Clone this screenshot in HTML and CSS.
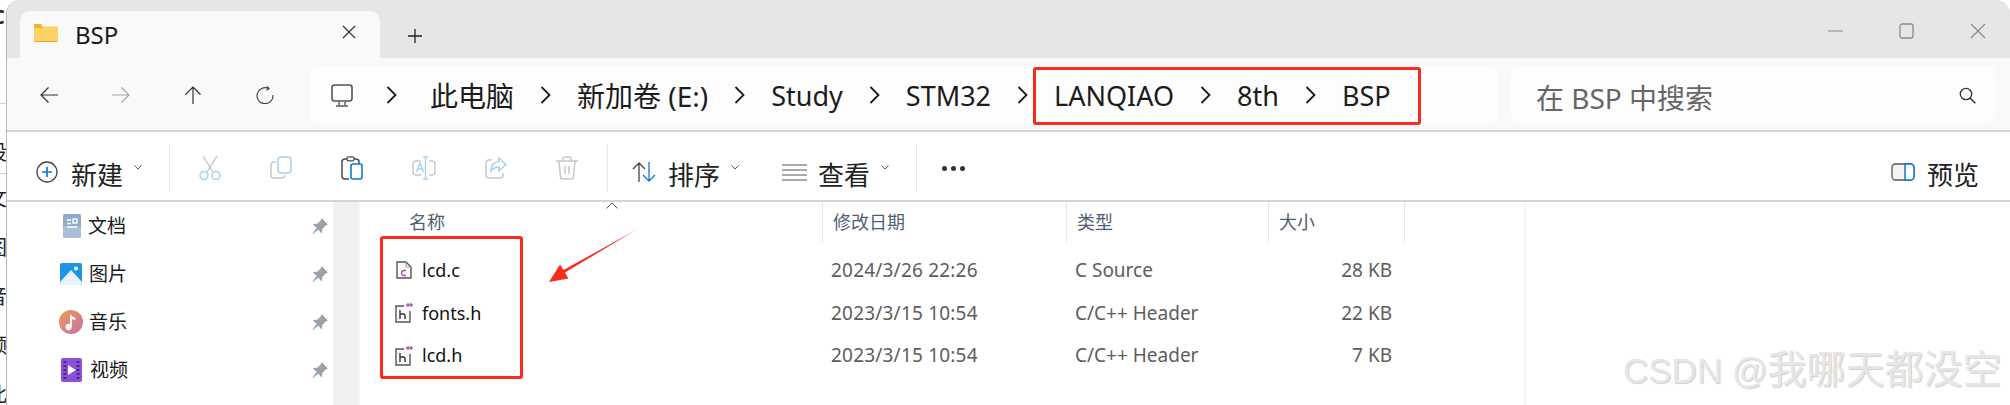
FILE: index.html
```html
<!DOCTYPE html>
<html lang="zh">
<head>
<meta charset="utf-8">
<title>BSP</title>
<link rel="stylesheet" href="styles.css">
</head>
<body>
<div class="page">
  <div class="strip">
    <span class="strip-c">C</span>
    <span class="strip-t first">设</span>
    <span class="strip-t">文</span>
    <span class="strip-t">图</span>
    <span class="strip-t">音</span>
    <span class="strip-t">频</span>
    <span class="strip-t">此</span>
  </div>
  <div class="window">
    <header class="titlebar">
      <div class="tab">
        <svg class="folder" width="24" height="18" viewBox="0 0 24 18"><path d="M0 1.5C0 .7.7 0 1.5 0h5.5l2.5 2.5H22.500c.8 0 1.500.7 1.500 1.500v12.500c0 .8-.7 1.500-1.500 1.500h-21C.7 18 0 17.300 0 16.500z" fill="#fbd264"/><path d="M0 4h9.500L7 1.500V0H1.500C.7 0 0 .7 0 1.500z" fill="#f0b429"/><path d="M0 17h24v-.5c0 .8-.7 1.500-1.500 1.500h-21C.7 18 0 17.300 0 16.500z" fill="#e9a91f"/></svg>
        <span class="tab-title">BSP</span>
        <svg class="tab-close" width="14" height="14" viewBox="0 0 14 14"><path d="M1 1l12 12M13 1L1 13" stroke="#333" stroke-width="1.200" fill="none"/></svg>
      </div>
      <svg class="tab-add" width="16" height="16" viewBox="0 0 16 16"><path d="M8 1v14M1 8h14" stroke="#222" stroke-width="1.300" fill="none"/></svg>
      <div class="controls">
        <svg width="16" height="16" viewBox="0 0 16 16"><path d="M0 8h15" stroke="#8a8a8a" stroke-width="1.200"/></svg>
        <svg width="16" height="16" viewBox="0 0 16 16"><rect x="1" y="1" width="13" height="14" rx="2" fill="none" stroke="#8a8a8a" stroke-width="1.300"/></svg>
        <svg width="16" height="16" viewBox="0 0 16 16"><path d="M1 1l14 14M15 1L1 15" stroke="#8a8a8a" stroke-width="1.200" fill="none"/></svg>
      </div>
    </header>

    <nav class="navbar">
      <div class="nav-buttons">
        <svg width="18" height="18" viewBox="0 0 18 18"><path d="M18 9H1M8.500 1.500L1 9l7.500 7.500" stroke="#333" stroke-width="1.200" fill="none"/></svg>
        <svg width="18" height="18" viewBox="0 0 18 18"><path d="M0 9h17M9.500 1.500L17 9l-7.500 7.500" stroke="#a8a8a8" stroke-width="1.200" fill="none"/></svg>
        <svg width="18" height="18" viewBox="0 0 18 18"><path d="M9 18V1M1.500 8.500L9 1l7.500 7.500" stroke="#333" stroke-width="1.200" fill="none"/></svg>
        <svg width="18" height="18" viewBox="0 0 18 18"><path d="M12.500 2.500A8 8 0 1 0 17 9M11 .5l2 2.200-2.600 1.600" stroke="#444" stroke-width="1.200" fill="none"/></svg>
      </div>
      <div class="address">
        <svg class="monitor" width="22" height="23" viewBox="0 0 22 23"><rect x="1" y="1" width="20" height="16" rx="2.500" fill="none" stroke="#555" stroke-width="1.600"/><path d="M8 17.500v3.500M14 17.500v3.500M5 22h12" stroke="#555" stroke-width="1.400" fill="none"/></svg>
        <svg class="chev" width="11" height="18" viewBox="0 0 11 18"><path d="M1.500 1l8 8-8 8" stroke="#1c1c1c" stroke-width="1.800" fill="none"/></svg>
        <span class="crumb cjk first-crumb">此电脑</span>
        <svg class="chev" width="11" height="18" viewBox="0 0 11 18"><path d="M1.500 1l8 8-8 8" stroke="#1c1c1c" stroke-width="1.800" fill="none"/></svg>
        <span class="crumb cjk">新加卷 (E:)</span>
        <svg class="chev" width="11" height="18" viewBox="0 0 11 18"><path d="M1.500 1l8 8-8 8" stroke="#1c1c1c" stroke-width="1.800" fill="none"/></svg>
        <span class="crumb">Study</span>
        <svg class="chev" width="11" height="18" viewBox="0 0 11 18"><path d="M1.500 1l8 8-8 8" stroke="#1c1c1c" stroke-width="1.800" fill="none"/></svg>
        <span class="crumb">STM32</span>
        <svg class="chev" width="11" height="18" viewBox="0 0 11 18"><path d="M1.500 1l8 8-8 8" stroke="#1c1c1c" stroke-width="1.800" fill="none"/></svg>
        <span class="crumb">LANQIAO</span>
        <svg class="chev" width="11" height="18" viewBox="0 0 11 18"><path d="M1.500 1l8 8-8 8" stroke="#1c1c1c" stroke-width="1.800" fill="none"/></svg>
        <span class="crumb">8th</span>
        <svg class="chev" width="11" height="18" viewBox="0 0 11 18"><path d="M1.500 1l8 8-8 8" stroke="#1c1c1c" stroke-width="1.800" fill="none"/></svg>
        <span class="crumb">BSP</span>
      </div>
      <div class="search">
        <span class="search-text">在 BSP 中搜索</span>
        <svg class="search-icon" width="17" height="17" viewBox="0 0 17 17"><circle cx="7" cy="7" r="5.700" fill="none" stroke="#333" stroke-width="1.300"/><path d="M11 11l5.300 5.300" stroke="#333" stroke-width="1.600"/></svg>
      </div>
    </nav>

    <div class="toolbar">
      <div class="tool new">
        <svg width="22" height="22" viewBox="0 0 22 22"><circle cx="11" cy="11" r="10" fill="none" stroke="#444" stroke-width="1.300"/><path d="M11 6v10M6 11h10" stroke="#0f78d4" stroke-width="1.700"/></svg>
        <span class="tool-label">新建</span>
        <svg class="caret" width="8" height="5" viewBox="0 0 8 5"><path d="M.5.5L4 4 7.500.5" stroke="#555" fill="none"/></svg>
      </div>
      <span class="sep first-sep"></span>
      <div class="actions">
        <svg width="22" height="24" viewBox="0 0 22 24"><path d="M4 0l10 16M18 0L8 16" stroke="#c4c4c4" stroke-width="1.300" fill="none"/><circle cx="5" cy="19.500" r="4" fill="none" stroke="#a6d0f2" stroke-width="1.500"/><circle cx="17" cy="19.500" r="4" fill="none" stroke="#a6d0f2" stroke-width="1.500"/></svg>
        <svg width="22" height="24" viewBox="0 0 22 24"><path d="M6 6H4a3 3 0 0 0-3 3v10a3 3 0 0 0 3 3h8a3 3 0 0 0 3-3" fill="none" stroke="#c8c8c8" stroke-width="1.500"/><rect x="8" y="1" width="13" height="16" rx="3" fill="#fff" stroke="#a6d0f2" stroke-width="1.500"/></svg>
        <svg width="22" height="24" viewBox="0 0 22 24"><path d="M8 23H4a3 3 0 0 1-3-3V6a3 3 0 0 1 3-3h11a3 3 0 0 1 3 3v3" fill="none" stroke="#4a4a4a" stroke-width="1.500"/><rect x="6" y=".8" width="7" height="4" rx="1.500" fill="#fff" stroke="#4a4a4a" stroke-width="1.300"/><rect x="10" y="8" width="11" height="15" rx="2" fill="#fff" stroke="#0f78d4" stroke-width="1.600"/></svg>
        <svg width="24" height="24" viewBox="0 0 24 24"><path d="M9 5H4a3 3 0 0 0-3 3v8a3 3 0 0 0 3 3h5M17 5h3a3 3 0 0 1 3 3v8a3 3 0 0 1-3 3h-3" fill="none" stroke="#c8c8c8" stroke-width="1.500"/><path d="M11 1h5M11 23h5M13.500 1v22M4.500 16l3.500-9 3.500 9M6 13h4" fill="none" stroke="#a6d0f2" stroke-width="1.400"/></svg>
        <svg width="22" height="22" viewBox="0 0 22 22"><path d="M7 3H4a3 3 0 0 0-3 3v12a3 3 0 0 0 3 3h11a3 3 0 0 0 3-3v-2" fill="none" stroke="#c8c8c8" stroke-width="1.500"/><path d="M14 1l7 6.500-7 6.500v-4c-4 0-6 1-8 4 0-6 3-9 8-9.500z" fill="#fff" stroke="#a6d0f2" stroke-width="1.500"/></svg>
        <svg width="22" height="24" viewBox="0 0 22 24"><path d="M0 5h22M7 5V3a2 2 0 0 1 2-2h4a2 2 0 0 1 2 2v2M3 5l1.500 16a2 2 0 0 0 2 2h9a2 2 0 0 0 2-2L19 5M9 10v8M13 10v8" fill="none" stroke="#c8c8c8" stroke-width="1.500"/></svg>
      </div>
      <span class="sep"></span>
      <div class="tool sort">
        <svg width="24" height="20" viewBox="0 0 24 20"><path d="M7 20V1M1 7l6-6 6 6" stroke="#444" stroke-width="1.300" fill="none"/><path d="M17 0v19M11 13l6 6 6-6" stroke="#0f78d4" stroke-width="1.300" fill="none"/></svg>
        <span class="tool-label">排序</span>
        <svg class="caret" width="8" height="5" viewBox="0 0 8 5"><path d="M.5.5L4 4 7.500.5" stroke="#555" fill="none"/></svg>
      </div>
      <div class="tool view">
        <svg width="25" height="17" viewBox="0 0 25 17"><path d="M0 1h25M0 6h25M0 11h25M0 16h25" stroke="#555" stroke-width="1.200"/></svg>
        <span class="tool-label">查看</span>
        <svg class="caret" width="8" height="5" viewBox="0 0 8 5"><path d="M.5.5L4 4 7.500.5" stroke="#555" fill="none"/></svg>
      </div>
      <span class="sep"></span>
      <div class="dots"><i></i><i></i><i></i></div>
      <div class="tool preview">
        <svg width="24" height="18" viewBox="0 0 24 18"><rect x="1" y="1" width="22" height="16" rx="3.500" fill="#f4f4f4" stroke="#555" stroke-width="1.300"/><path d="M14 1h5.500A3.500 3.500 0 0 1 23 4.500v9a3.500 3.500 0 0 1-3.500 3.500H14z" fill="#fff" stroke="#0f78d4" stroke-width="1.500"/></svg>
        <span class="tool-label">预览</span>
      </div>
    </div>

    <main class="content">
      <aside class="sidebar">
        <div class="side-row">
          <svg class="side-icon" width="22" height="24" viewBox="0 0 22 24"><rect x="2" width="18" height="24" rx="2" fill="#8fabc9"/><rect x="2" y="12" width="18" height="12" rx="2" fill="#a9bfd6"/><path d="M6 6h4M6 9.500h4M12 5h4v4h-4zM6 13h10" stroke="#fff" stroke-width="1.400" fill="none"/></svg>
          <span class="side-label">文档</span>
          <svg class="pin" width="16" height="16" viewBox="0 0 16 16"><path d="M9.500 0L16 6.500l-2 .7-3.500 3.500-.5 3.500-1 1-2.700-3.500L1 16l-.5-.5 4.300-5.800L1 7l1-1 3.500-.5L9 2z" fill="#97a3ad"/></svg>
        </div>
        <div class="side-row">
          <svg class="side-icon" width="22" height="22" viewBox="0 0 22 22"><rect width="22" height="22" rx="2" fill="#1c95e6"/><path d="M0 19L11 7l11 12v1a2 2 0 0 1-2 2H2a2 2 0 0 1-2-2z" fill="#e8f4fc"/><circle cx="16" cy="5.500" r="2" fill="#fff"/></svg>
          <span class="side-label">图片</span>
          <svg class="pin" width="16" height="16" viewBox="0 0 16 16"><path d="M9.500 0L16 6.500l-2 .7-3.500 3.500-.5 3.500-1 1-2.700-3.500L1 16l-.5-.5 4.300-5.800L1 7l1-1 3.500-.5L9 2z" fill="#97a3ad"/></svg>
        </div>
        <div class="side-row">
          <svg class="side-icon" width="24" height="24" viewBox="0 0 24 24"><defs><linearGradient id="music" x1="0" y1="0" x2="1" y2="1"><stop offset="0" stop-color="#ee9a55"/><stop offset="1" stop-color="#c770a8"/></linearGradient></defs><circle cx="12" cy="12" r="12" fill="url(#music)"/><path d="M11 5h1.800c.3 2 2 2.500 3.500 3v2c-1.500 0-2.500-.5-3.500-1.200V17a3.200 3.200 0 1 1-1.800-2.900z" fill="#fff"/></svg>
          <span class="side-label">音乐</span>
          <svg class="pin" width="16" height="16" viewBox="0 0 16 16"><path d="M9.500 0L16 6.500l-2 .7-3.500 3.500-.5 3.500-1 1-2.700-3.500L1 16l-.5-.5 4.300-5.800L1 7l1-1 3.500-.5L9 2z" fill="#97a3ad"/></svg>
        </div>
        <div class="side-row">
          <svg class="side-icon" width="21" height="24" viewBox="0 0 21 24"><rect width="21" height="24" rx="2" fill="#8a50d8"/><path d="M4 3v18M17 3v18" stroke="#4c2490" stroke-width="3" stroke-dasharray="2 2"/><path d="M7 7l8 5-8 5z" fill="#fff"/></svg>
          <span class="side-label">视频</span>
          <svg class="pin" width="16" height="16" viewBox="0 0 16 16"><path d="M9.500 0L16 6.500l-2 .7-3.500 3.500-.5 3.500-1 1-2.700-3.500L1 16l-.5-.5 4.300-5.800L1 7l1-1 3.500-.5L9 2z" fill="#97a3ad"/></svg>
        </div>
      </aside>
      <div class="gutter"></div>
      <section class="files">
        <div class="file-grid">
          <div class="head name-head">名称
            <svg class="sort-caret" width="12" height="7" viewBox="0 0 12 7"><path d="M.5 6.500L6 1l5.500 5.500" stroke="#555" fill="none"/></svg>
          </div>
          <div class="head">修改日期</div>
          <div class="head">类型</div>
          <div class="head">大小</div>
          <div class="head end-head"></div>

          <div class="cell name">
            <svg width="16" height="18" viewBox="0 0 16 18"><path d="M1 1h9l5 5v11H1z" fill="#fafafa" stroke="#555" stroke-width="1.400"/><path d="M10 1v5h5" fill="none" stroke="#999"/><path d="M10 9.500H8a2 2 0 0 0 0 5h2" fill="none" stroke="#a65aa8" stroke-width="1.300"/></svg>
            <span>lcd.c</span>
          </div>
          <div class="cell date">2024/3/26 22:26</div>
          <div class="cell type">C Source</div>
          <div class="cell size">28 KB</div>
          <div class="cell"></div>

          <div class="cell name">
            <svg width="18" height="21" viewBox="0 0 18 21"><path d="M9 4H1v16h14V9" fill="#fafafa" stroke="#555" stroke-width="1.400"/><path d="M5 8v9M5 12h3.500a1.500 1.500 0 0 1 1.500 1.500V17" fill="none" stroke="#333" stroke-width="1.400"/><path d="M11 3h4M13 1v4M14 3h4M16 1v4" stroke="#a65aa8" stroke-width="1.300" fill="none"/></svg>
            <span>fonts.h</span>
          </div>
          <div class="cell date">2023/3/15 10:54</div>
          <div class="cell type">C/C++ Header</div>
          <div class="cell size">22 KB</div>
          <div class="cell"></div>

          <div class="cell name">
            <svg width="18" height="21" viewBox="0 0 18 21"><path d="M9 4H1v16h14V9" fill="#fafafa" stroke="#555" stroke-width="1.400"/><path d="M5 8v9M5 12h3.500a1.500 1.500 0 0 1 1.500 1.500V17" fill="none" stroke="#333" stroke-width="1.400"/><path d="M11 3h4M13 1v4M14 3h4M16 1v4" stroke="#a65aa8" stroke-width="1.300" fill="none"/></svg>
            <span>lcd.h</span>
          </div>
          <div class="cell date">2023/3/15 10:54</div>
          <div class="cell type">C/C++ Header</div>
          <div class="cell size">7 KB</div>
          <div class="cell"></div>
        </div>
      </section>
    </main>
  </div>

  <div class="mark mark-path"></div>
  <div class="mark mark-files"></div>
  <svg class="arrow" width="90" height="56" viewBox="0 0 90 56"><path d="M87 1L16 43.500l3.500 6L0 53 11 35.500l3.500 5.500z" fill="#fb2a1e"/></svg>
  <div class="watermark"><span class="wm-latin">CSDN @</span>我哪天都没空</div>
</div>
</body>
</html>
```

FILE: styles.css
```css
* { box-sizing: border-box; }
html, body { margin: 0; padding: 0; background: #fff; }
body {
  font-family: "Noto Sans", "Noto Sans CJK SC", sans-serif;
  color: #1a1a1a;
}
svg { display: block; flex: none; }

.page {
  position: relative;
  display: flex;
  width: 2010px;
  height: 405px;
  overflow: hidden;
  background: #fff;
}

.strip {
  width: 6px;
  flex: none;
  overflow: hidden;
  display: flex;
  flex-direction: column;
  background:
    linear-gradient(#cfcfcf, #cfcfcf) 0 103px / 100% 1px no-repeat,
    linear-gradient(#cfcfcf, #cfcfcf) 0 173px / 100% 1px no-repeat,
    #fff;
  font-size: 20px;
  line-height: 49px;
  color: #222;
}
.strip-c { flex: none; height: 128px; line-height: 34px; margin-left: -8px; font-weight: 700; }
.strip-t { height: 49px; margin-left: -13px; flex: none; }
.strip-t.first { height: 46px; }

.window {
  flex: 1;
  min-width: 0;
  display: flex;
  flex-direction: column;
  border-left: 1px solid #b8b8b8;
  border-top-left-radius: 14px;
  border-top-right-radius: 14px;
  overflow: hidden;
  background: #fff;
}

.titlebar {
  height: 58px;
  flex: none;
  display: flex;
  align-items: flex-start;
  padding: 11px 0 0 13px;
  background: #e6e6e6;
}
.tab {
  width: 360px;
  height: 47px;
  display: flex;
  align-items: center;
  padding-left: 14px;
  background: #f9f9f9;
  border-radius: 10px 10px 0 0;
}
.folder { margin-top: -3px; }
.tab-title { margin-left: 17px; font-size: 24px; line-height: 32px; }
.tab-close { margin-left: 224px; margin-top: -6px; }
.tab-add { margin: 17px 0 0 27px; }
.controls {
  margin-left: auto;
  display: flex;
  gap: 55px;
  padding: 12px 24px 0 0;
}

.navbar {
  height: 74px;
  flex: none;
  display: flex;
  align-items: center;
  padding: 2px 0 0 33px;
  background: #f9f9f9;
  border-bottom: 2px solid #d4d4d4;
}
.nav-buttons { display: flex; gap: 54px; }
.address {
  width: 1188px;
  height: 58px;
  margin-left: 36px;
  display: flex;
  align-items: center;
  gap: 26px;
  padding-left: 21px;
  background: #fdfdfd;
  border-radius: 8px;
}
.monitor { margin-right: 7px; }
.crumb { font-size: 27px; line-height: 36px; color: #1c1c1c; white-space: nowrap; margin-top: 2px; }
.crumb.cjk { font-size: 28px; }
.first-crumb { margin-left: 7px; }
.search {
  width: 485px;
  height: 58px;
  margin-left: 13px;
  display: flex;
  align-items: center;
  padding: 0 20px 0 25px;
  background: #fdfdfd;
  border-radius: 8px;
}
.search-text { font-size: 28px; line-height: 36px; color: #666; margin-top: 6px; }
.search-icon { margin-left: auto; }

.toolbar {
  height: 70px;
  flex: none;
  display: flex;
  align-items: center;
  padding: 4px 31px 0 29px;
  background: #fff;
  border-bottom: 2px solid #d4d4d4;
}
.tool { display: flex; align-items: center; }
.tool > svg:first-child { margin-top: 8px; }
.tool-label { font-size: 26px; line-height: 34px; color: #222; margin-top: 14px; }
.caret { align-self: flex-start; margin: 21px 0 0 11px; }
.new .tool-label { margin-left: 13px; }
.sep { width: 1px; height: 48px; flex: none; background: #e6e6e6; }
.first-sep { margin-left: 27px; }
.actions { display: flex; align-items: center; gap: 49px; margin: 0 29px 0 29px; }
.sort { margin-left: 24px; }
.sort .tool-label { margin-left: 12px; }
.view { margin-left: 43px; }
.view .tool-label { margin-left: 11px; }
.view + .sep { margin-left: 27px; }
.dots { display: flex; gap: 4px; margin-left: 25px; }
.dots i { width: 5px; height: 5px; border-radius: 50%; background: #333; }
.preview { margin-left: auto; }
.preview .tool-label { margin-left: 12px; }

.content { flex: 1; min-height: 0; display: flex; }
.sidebar {
  width: 326px;
  flex: none;
}
.side-row {
  height: 48px;
  display: flex;
  align-items: center;
}
.side-icon { margin-left: 53px; }
.side-row:nth-child(1) .side-icon { margin-left: 54px; margin-right: 3px; }
.side-row:nth-child(2) .side-icon { margin-right: 5px; }
.side-row:nth-child(3) .side-icon { margin-left: 52px; margin-right: 4px; }
.side-row:nth-child(4) .side-icon { margin-left: 54px; margin-right: 6px; }
.side-label { margin-left: 2px; font-size: 19px; line-height: 26px; color: #1a1a1a; }
.pin { margin-left: auto; margin-right: 5px; }
.gutter { width: 25px; flex: none; background: #f0f0f0; }

.files {
  width: 1168px;
  flex: none;
  border-left: 2px solid #f5f5f5;
  border-right: 2px solid #f5f5f5;
}
.file-grid {
  display: grid;
  grid-template-columns: 462px 244px 202px 136px 1fr;
  grid-template-rows: 40px repeat(3, 42.5px);
  font-size: 19px;
}
.head {
  display: flex;
  align-items: center;
  padding-left: 10px;
  border-left: 1px solid #e5e5e5;
  color: #4f5f73;
  font-size: 18px;
  line-height: 24px;
  position: relative;
}
.name-head { padding-left: 49px; border-left: 0; }
.sort-caret { position: absolute; left: 246px; top: 0; }
.cell {
  display: flex;
  align-items: center;
  padding-left: 9px;
  line-height: 24px;
  color: #5d5d5d;
  position: relative;
  top: 7px;
}
.cell.date { letter-spacing: .2px; }
.cell.name { padding-left: 35px; gap: 9px; color: #111; font-size: 18px; }
.cell.name svg { width: 18px; }
.cell.size { justify-content: flex-end; padding-right: 12px; }

.mark {
  position: absolute;
  border: 3px solid #fb2a1e;
  border-radius: 3px;
}
.mark-path { left: 1033px; top: 67px; width: 388px; height: 58px; }
.mark-files { left: 380px; top: 236px; width: 143px; height: 143px; }
.arrow { position: absolute; left: 549px; top: 229px; }
.watermark {
  position: absolute;
  left: 1623px;
  top: 346px;
  font-family: "Liberation Sans", "Noto Sans CJK SC", sans-serif;
  font-size: 39px;
  line-height: 48px;
  color: #e6e6e6;
  text-shadow: 1px 1px 1px #cfcfcf;
  white-space: nowrap;
}
.wm-latin { font-size: 35px; }
```
